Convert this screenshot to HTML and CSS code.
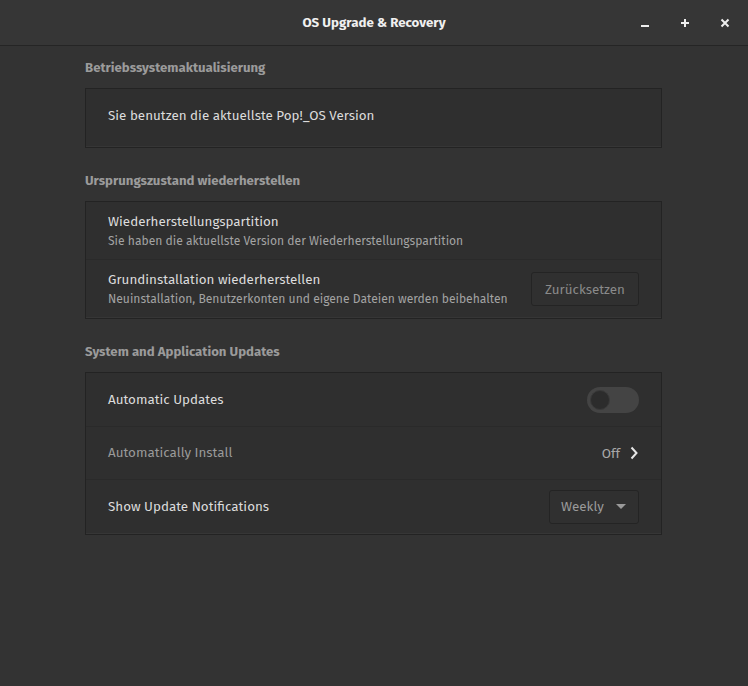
FILE: index.html
```html
<!DOCTYPE html>
<html lang="de">
<head>
<meta charset="utf-8">
<title>OS Upgrade &amp; Recovery</title>
<link rel="stylesheet" href="styles.css">
</head>
<body>
<div class="window">
  <header class="titlebar">
    <div class="title">OS Upgrade &amp; Recovery</div>
    <div class="controls">
      <span class="ctl"><svg width="10" height="10" viewBox="0 0 10 10"><rect x="1" y="7" width="8" height="2" fill="#eeeeee"/></svg></span>
      <span class="ctl"><svg width="10" height="10" viewBox="0 0 10 10"><rect x="1" y="4" width="8" height="2" fill="#eeeeee"/><rect x="4" y="1" width="2" height="8" fill="#eeeeee"/></svg></span>
      <span class="ctl"><svg width="10" height="10" viewBox="0 0 10 10"><path d="M1.5 1.5 L8.5 8.5 M8.5 1.5 L1.5 8.5" stroke="#eeeeee" stroke-width="2"/></svg></span>
    </div>
  </header>
  <main class="content">
    <section class="section">
      <h2 class="heading">Betriebssystemaktualisierung</h2>
      <div class="card">
        <div class="row row-single">
          <div class="label">Sie benutzen die aktuellste Pop!_OS Version</div>
        </div>
      </div>
    </section>
    <section class="section">
      <h2 class="heading">Ursprungszustand wiederherstellen</h2>
      <div class="card">
        <div class="row row-double">
          <div class="texts">
            <div class="label">Wiederherstellungspartition</div>
            <div class="sub">Sie haben die aktuellste Version der Wiederherstellungspartition</div>
          </div>
        </div>
        <div class="row row-double">
          <div class="texts">
            <div class="label">Grundinstallation wiederherstellen</div>
            <div class="sub">Neuinstallation, Benutzerkonten und eigene Dateien werden beibehalten</div>
          </div>
          <button class="btn">Zurücksetzen</button>
        </div>
      </div>
    </section>
    <section class="section">
      <h2 class="heading">System and Application Updates</h2>
      <div class="card">
        <div class="row row-upd1">
          <div class="label">Automatic Updates</div>
          <div class="switch"><span class="knob"></span></div>
        </div>
        <div class="row row-upd2">
          <div class="label dim">Automatically Install</div>
          <div class="value">Off
            <svg width="10" height="14" viewBox="0 0 10 14"><path d="M2.5 1.5 L7.5 7 L2.5 12.5" stroke="#e6e6e6" stroke-width="2" fill="none"/></svg>
          </div>
        </div>
        <div class="row row-upd3">
          <div class="label">Show Update Notifications</div>
          <div class="dropdown">Weekly
            <svg width="10" height="6" viewBox="0 0 10 6"><path d="M0 0 L10 0 L5 5 Z" fill="#9a9a9a"/></svg>
          </div>
        </div>
      </div>
    </section>
  </main>
</div>
</body>
</html>
```
FILE: styles.css
```css
* { box-sizing: border-box; }
html, body { margin: 0; padding: 0; }
body {
  background: #333333;
  font-family: "Fira Sans", "Lato", "Noto Sans", sans-serif;
  color: #dedede;
  width: 748px;
  height: 686px;
  overflow: hidden;
}
.window { width: 748px; height: 686px; background: #333333; }
.titlebar {
  height: 46px;
  background: #363636;
  border-bottom: 1px solid #252525;
  display: flex;
  align-items: center;
  justify-content: center;
  position: relative;
}
.title {
  font-weight: 700;
  font-size: 13.3px;
  color: #f0f0f0;
}
.controls {
  position: absolute;
  right: 18px;
  top: 18px;
  display: flex;
  gap: 30px;
}
.ctl { width: 10px; height: 10px; display: flex; }
.content {
  padding: 12px 86px 0 85px;
}
.section { margin-bottom: 23px; }
.heading {
  margin: 0 0 10px 0;
  font-size: 13.2px;
  font-weight: 700;
  color: #9b9b9b;
  line-height: 20px;
}
.card {
  background: #2f2f2f;
  border: 1px solid #232323;
}
.row {
  display: flex;
  align-items: center;
  justify-content: space-between;
  padding: 0 22px 0 22px;
  border-bottom: 1px solid #2a2a2a;
}
.row:last-child { border-bottom: 1px solid #363636; }
.row-single { height: 58px; padding-bottom: 4px; }
.row-double { height: 58px; }
.row-upd1 { height: 54px; }
.row-upd2 { height: 53px; }
.row-upd3 { height: 54px; }
.label { font-size: 13.4px; color: #dcdcdc; line-height: 18px; }
.label.dim { color: #9a9a9a; }
.texts { display: flex; flex-direction: column; gap: 3px; padding-top: 1px; }
.sub { font-size: 12.1px; color: #a3a3a3; line-height: 15px; }
.btn {
  font-family: inherit;
  font-size: 13.4px;
  color: #8a8a8a;
  background: #303030;
  border: 1px solid #242424;
  border-radius: 3px;
  width: 108px;
  height: 34px;
  padding: 0;
  margin-top: 1px;
}
.switch {
  width: 52px;
  height: 26px;
  border-radius: 13px;
  background: #444444;
  position: relative;
  margin-top: 1px;
}
.knob {
  position: absolute;
  left: 3px;
  top: 3px;
  width: 20px;
  height: 20px;
  border-radius: 50%;
  background: #2c2c2c;
  border: 1px solid #3a3a3a;
}
.value {
  font-size: 13.4px;
  color: #a8a8a8;
  display: flex;
  align-items: center;
  gap: 9px;
}
.dropdown {
  width: 90px;
  height: 34px;
  border: 1px solid #242424;
  border-radius: 3px;
  background: #303030;
  font-size: 13.4px;
  color: #9a9a9a;
  display: flex;
  align-items: center;
  justify-content: space-between;
  padding: 0 12px 0 11px;
}
```
